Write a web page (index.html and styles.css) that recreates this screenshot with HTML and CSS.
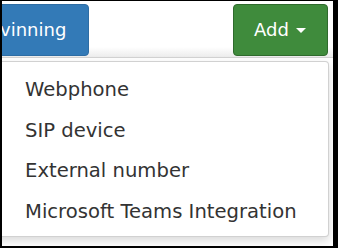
FILE: index.html
```html
<!DOCTYPE html>
<html>
<head>
<meta charset="utf-8">
<link rel="stylesheet" href="styles.css">
</head>
<body>
<div class="frame">
  <div class="toolbar">
    <button class="btn btn-blue">vinning</button>
    <button class="btn btn-green">Add <span class="caret"></span></button>
  </div>
  <div class="menu-wrap">
    <ul class="menu">
      <li class="item">Webphone</li>
      <li class="item">SIP device</li>
      <li class="item">External number</li>
      <li class="item">Microsoft Teams Integration</li>
    </ul>
  </div>
</div>
</body>
</html>
```
FILE: styles.css
```css
html, body {
  margin: 0;
  padding: 0;
  background: #000;
  height: 248px;
  overflow: hidden;
}
.frame {
  margin: 1px 5px 0 2px;
  height: 245px;
  background: #fff;
  overflow: hidden;
  font-family: "DejaVu Sans", sans-serif;
}
.toolbar {
  display: flex;
  justify-content: space-between;
  align-items: flex-start;
  padding-top: 3px;
  height: 53px;
  background: linear-gradient(to bottom, #fff 0%, #fff 82%, #ececec 100%);
  border-bottom: 1px solid #d2d2d2;
}
.btn {
  height: 52px;
  border-radius: 4px;
  color: #fff;
  font-family: "DejaVu Sans", sans-serif;
  font-size: 18px;
  line-height: 1;
  display: flex;
  align-items: center;
  cursor: pointer;
}
.btn-blue {
  background: #337ab7;
  border: 1px solid #2e6da4;
  margin-left: -6px;
  padding: 0 22px 0 3px;
}
.btn-green {
  background: #3f8b3c;
  border: 1px solid #2f6b2d;
  margin-right: 5px;
  width: 95px;
  padding: 0 0 0 20px;
}
.caret {
  display: inline-block;
  width: 0;
  height: 0;
  margin-left: 7px;
  border-left: 5px solid transparent;
  border-right: 5px solid transparent;
  border-top: 5px solid #fff;
}
.menu-wrap {
  display: flex;
  justify-content: flex-end;
  padding-top: 3px;
}
.menu {
  list-style: none;
  margin: 0 4px 0 -20px;
  padding: 8px 0 4px 0;
  width: 360px;
  background: #fff;
  border: 1px solid rgba(0, 0, 0, 0.18);
  border-radius: 4px;
  box-shadow: 0 4px 10px rgba(0, 0, 0, 0.15);
}
.item {
  height: 40.6px;
  line-height: 40.6px;
  padding-left: 42px;
  font-size: 19.6px;
  color: #333;
  white-space: nowrap;
}
```
